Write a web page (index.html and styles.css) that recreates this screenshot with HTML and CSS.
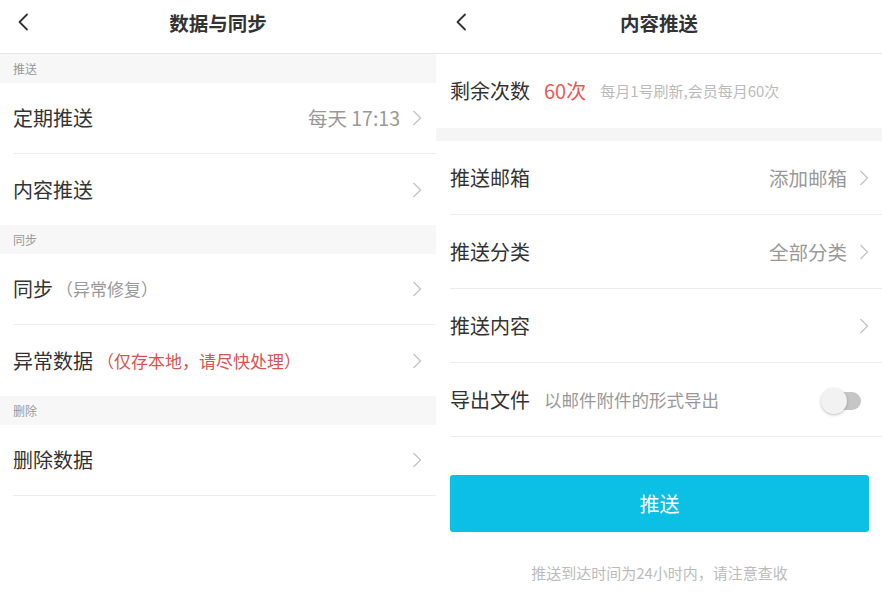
FILE: index.html
```html
<!DOCTYPE html>
<html lang="zh-CN">
<head>
<meta charset="utf-8">
<title>数据与同步 / 内容推送</title>
<link rel="stylesheet" href="styles.css">
</head>
<body>
<div class="screens">
  <section class="panel panel-left">
    <header class="nav">
      <svg class="back" width="14" height="18" viewBox="0 0 14 18"><polyline points="11,1.5 3.5,9 11,16.5" fill="none" stroke="#333" stroke-width="1.8" stroke-linecap="round" stroke-linejoin="round"/></svg>
      <h1 class="title">数据与同步</h1>
    </header>
    <div class="group-title">推送</div>
    <div class="row row-l bordered">
      <span class="label">定期推送</span>
      <span class="value">每天 17:13</span>
      <svg class="chev" width="10" height="16" viewBox="0 0 10 16"><polyline points="1.5,1 8.5,8 1.5,15" fill="none" stroke="#c4c4c4" stroke-width="1.4"/></svg>
    </div>
    <div class="row row-l">
      <span class="label">内容推送</span>
      <span class="spacer"></span>
      <svg class="chev" width="10" height="16" viewBox="0 0 10 16"><polyline points="1.5,1 8.5,8 1.5,15" fill="none" stroke="#c4c4c4" stroke-width="1.4"/></svg>
    </div>
    <div class="group-title">同步</div>
    <div class="row row-l bordered">
      <span class="label">同步</span><span class="note">（异常修复）</span>
      <span class="spacer"></span>
      <svg class="chev" width="10" height="16" viewBox="0 0 10 16"><polyline points="1.5,1 8.5,8 1.5,15" fill="none" stroke="#c4c4c4" stroke-width="1.4"/></svg>
    </div>
    <div class="row row-l">
      <span class="label">异常数据</span><span class="note warn">（仅存本地，请尽快处理）</span>
      <span class="spacer"></span>
      <svg class="chev" width="10" height="16" viewBox="0 0 10 16"><polyline points="1.5,1 8.5,8 1.5,15" fill="none" stroke="#c4c4c4" stroke-width="1.4"/></svg>
    </div>
    <div class="group-title">删除</div>
    <div class="row row-l bordered">
      <span class="label">删除数据</span>
      <span class="spacer"></span>
      <svg class="chev" width="10" height="16" viewBox="0 0 10 16"><polyline points="1.5,1 8.5,8 1.5,15" fill="none" stroke="#c4c4c4" stroke-width="1.4"/></svg>
    </div>
  </section>

  <section class="panel panel-right">
    <header class="nav">
      <svg class="back" width="14" height="18" viewBox="0 0 14 18"><polyline points="11,1.5 3.5,9 11,16.5" fill="none" stroke="#333" stroke-width="1.8" stroke-linecap="round" stroke-linejoin="round"/></svg>
      <h1 class="title">内容推送</h1>
    </header>
    <div class="row row-r quota">
      <span class="label">剩余次数</span>
      <span class="count">60次</span>
      <span class="hint">每月1号刷新,会员每月60次</span>
    </div>
    <div class="gap"></div>
    <div class="row row-r bordered">
      <span class="label">推送邮箱</span>
      <span class="value">添加邮箱</span>
      <svg class="chev" width="10" height="16" viewBox="0 0 10 16"><polyline points="1.5,1 8.5,8 1.5,15" fill="none" stroke="#c4c4c4" stroke-width="1.4"/></svg>
    </div>
    <div class="row row-r bordered">
      <span class="label">推送分类</span>
      <span class="value">全部分类</span>
      <svg class="chev" width="10" height="16" viewBox="0 0 10 16"><polyline points="1.5,1 8.5,8 1.5,15" fill="none" stroke="#c4c4c4" stroke-width="1.4"/></svg>
    </div>
    <div class="row row-r bordered">
      <span class="label">推送内容</span>
      <span class="spacer"></span>
      <svg class="chev" width="10" height="16" viewBox="0 0 10 16"><polyline points="1.5,1 8.5,8 1.5,15" fill="none" stroke="#c4c4c4" stroke-width="1.4"/></svg>
    </div>
    <div class="row row-r bordered">
      <span class="label">导出文件</span>
      <span class="sub">以邮件附件的形式导出</span>
      <span class="spacer"></span>
      <span class="switch"><span class="knob"></span></span>
    </div>
    <div class="actions">
      <button class="btn" type="button">推送</button>
      <p class="tip">推送到达时间为24小时内，请注意查收</p>
    </div>
  </section>
</div>
</body>
</html>
```

FILE: styles.css
```css
* { box-sizing: border-box; }
html, body { margin: 0; padding: 0; background: #fff; }
body {
  font-family: "Noto Sans CJK SC", "Noto Sans", "Liberation Sans", sans-serif;
  color: #333;
}
.screens {
  display: flex;
  width: 882px;
  height: 602px;
  overflow: hidden;
}
.panel {
  display: flex;
  flex-direction: column;
  background: #fff;
}
.panel-left { width: 436px; }
.panel-right { flex: 1; }

.nav {
  position: relative;
  height: 54px;
  border-bottom: 1px solid #e6e6e6;
  display: flex;
  align-items: center;
  justify-content: center;
  padding-bottom: 8px;
}
.back {
  position: absolute;
  left: 16px;
  top: 13px;
}
.panel-right .back { left: 18px; }
.title {
  margin: 0;
  font-size: 19.5px;
  font-weight: 700;
  line-height: 24px;
  color: #333;
}

.group-title {
  height: 29px;
  background: #f7f7f7;
  font-size: 12px;
  color: #999;
  padding: 8px 0 0 13px;
  line-height: 14px;
}

.row {
  display: flex;
  align-items: center;
  font-size: 20px;
  line-height: 24px;
  background: #fff;
}
.row-l {
  height: 71px;
  margin-left: 13px;
  padding-right: 14px;
}
.row-r {
  height: 74px;
  margin-left: 14px;
  padding-right: 13px;
}
.bordered { border-bottom: 1px solid #ededed; }
.label { color: #333; }
.spacer { flex: 1; }
.value {
  margin-left: auto;
  color: #999;
  font-size: 19.5px;
  margin-right: 12px;
}
.chev { display: block; flex: none; }
.note {
  font-size: 17px;
  color: #999;
  margin-left: 3px;
}
.note.warn { color: #d9534f; margin-left: 4px; }

.quota { height: 74px; }
.count {
  color: #f05757;
  font-size: 20px;
  margin-left: 14px;
}
.hint {
  color: #bbb;
  font-size: 15px;
  margin-left: 14px;
}
.gap {
  height: 13px;
  background: #f5f5f5;
}
.sub {
  color: #999;
  font-size: 17.5px;
  margin-left: 14px;
}
.switch {
  position: relative;
  width: 40px;
  height: 18px;
  margin-right: 8px;
  margin-top: 2px;
}
.switch::before {
  content: "";
  position: absolute;
  left: 10px;
  right: 0;
  top: 0;
  height: 18px;
  border-radius: 9px;
  background: #c6c6c6;
}
.knob {
  position: absolute;
  left: 0;
  top: -4px;
  width: 26px;
  height: 26px;
  border-radius: 50%;
  background: #f2f2f2;
  box-shadow: 0 1px 3px rgba(0,0,0,0.25);
}

.actions {
  padding: 38px 13px 0 14px;
  display: flex;
  flex-direction: column;
  align-items: center;
}
.btn {
  width: 100%;
  height: 57px;
  border: none;
  border-radius: 3px;
  background: #0cbfe4;
  color: #fff;
  font-family: inherit;
  font-size: 20px;
  line-height: 24px;
  padding: 0;
}
.tip {
  margin: 31px 0 0;
  font-size: 15px;
  line-height: 20px;
  color: #bbb;
}
```
